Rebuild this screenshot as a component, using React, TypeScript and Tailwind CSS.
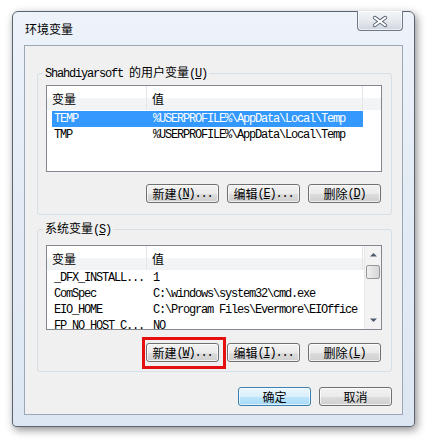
import React from 'react';

const cjk = "font-['Noto_Sans_CJK_SC',sans-serif]";
const mono = "font-['Liberation_Mono','Noto_Sans_CJK_SC',monospace] tracking-[-1.2px]";

function Ul({ children }: { children: React.ReactNode }) {
  return <span className="underline underline-offset-[1px]">{children}</span>;
}

function WinButton({
  label,
  hotkey,
  dots = true,
  primary = false,
}: {
  label: string;
  hotkey?: string;
  dots?: boolean;
  primary?: boolean;
}) {
  return (
    <button
      className={
        primary
          ? 'flex h-[19px] w-[73px] items-center justify-center rounded-[3px] border border-[#3c7fb1] bg-[linear-gradient(to_bottom,#eaf6fd_0%,#d9f0fc_50%,#bee6fd_51%,#a7d9f5_100%)] shadow-[inset_0_0_0_1px_rgba(255,255,255,0.6)]'
          : 'flex h-[19px] w-[73px] items-center justify-center rounded-[3px] border border-[#707070] bg-[linear-gradient(to_bottom,#f2f2f2_0%,#ebebeb_50%,#dddddd_51%,#cfcfcf_100%)] shadow-[inset_0_0_0_1px_rgba(255,255,255,0.7)]'
      }
    >
      <span className={`${cjk} text-[12px] leading-[16px] text-black`}>{label}</span>
      {hotkey && (
        <span className={`${mono} text-[12px] leading-[16px] text-black`}>
          (<Ul>{hotkey}</Ul>){dots ? '...' : ''}
        </span>
      )}
    </button>
  );
}

function ListHeader() {
  return (
    <div className="flex h-[24px] shrink-0 bg-[linear-gradient(to_bottom,#ffffff_0%,#ffffff_50%,#f4f5f7_51%,#f1f2f4_100%)]">
      <div className={`${cjk} w-[100px] border-r border-[#e3e5e8] pl-[5px] pt-[5px] text-[12px] leading-[16px]`}>变量</div>
      <div className={`${cjk} w-[216px] border-r border-[#e3e5e8] pl-[5px] pt-[5px] text-[12px] leading-[16px]`}>值</div>
      <div className="flex-1" />
    </div>
  );
}

function Row({ name, value, selected = false }: { name: string; value: string; selected?: boolean }) {
  return (
    <div className="flex h-[16px] shrink-0 pl-[5px]">
      <div className={`flex w-[311px] ${selected ? 'bg-[#3399ff] text-white' : 'text-black'}`}>
        <div className={`${mono} w-[95px] overflow-hidden whitespace-nowrap pl-[2px] text-[12px] leading-[16px]`}>{name}</div>
        <div className={`${mono} flex-1 overflow-hidden whitespace-nowrap pl-[6px] text-[12px] leading-[16px]`}>{value}</div>
      </div>
    </div>
  );
}

function Arrow({ up }: { up: boolean }) {
  return (
    <svg width="9" height="5" viewBox="0 0 9 5">
      <path d={up ? 'M1 4.5 L4.5 1 L8 4.5 Z' : 'M1 0.5 L4.5 4 L8 0.5 Z'} fill="#4d5a6e" />
    </svg>
  );
}

function ScrollBar() {
  return (
    <div className="flex w-[17px] shrink-0 flex-col border-l border-[#e8e8e8] bg-[#f3f3f3]">
      <div className="flex h-[17px] items-center justify-center">
        <Arrow up />
      </div>
      <div className="mx-[1px] mt-[2px] h-[14px] rounded-[2px] border border-[#979797] bg-[linear-gradient(to_right,#f0f0f0,#e2e2e2_50%,#d6d6d6)]" />
      <div className="flex-1" />
      <div className="flex h-[17px] items-center justify-center">
        <Arrow up={false} />
      </div>
    </div>
  );
}

function GroupLegend({ children }: { children: React.ReactNode }) {
  return <legend className="-ml-[3px] px-[2px] text-[12px] leading-[16px] text-black">{children}</legend>;
}

function CloseButton() {
  return (
    <div className="-mt-px flex h-[20px] w-[46px] items-center justify-center rounded-b-[4px] border border-t-0 border-[#6f7b88] bg-[linear-gradient(to_bottom,#f4f6f9_0%,#e6eaef_50%,#cfd6de_100%)] shadow-[inset_0_0_0_1px_rgba(255,255,255,0.6)]">
      <svg width="46" height="20" viewBox="0 0 46 20">
        <path d="M17.5 6.5 L28.5 14.5 M28.5 6.5 L17.5 14.5" stroke="#5f6b78" strokeWidth="4" strokeLinecap="round" />
        <path d="M17.5 6.5 L28.5 14.5 M28.5 6.5 L17.5 14.5" stroke="#ffffff" strokeWidth="2" strokeLinecap="round" />
      </svg>
    </div>
  );
}

export default function App() {
  return (
    <div className="h-[443px] w-[433px] overflow-hidden bg-white pl-[12px] pt-[11px]">
      {/* window frame */}
      <div className="flex h-[416px] w-[403px] flex-col rounded-t-[6px] rounded-b-[4px] border border-[#5b6470] bg-[linear-gradient(to_bottom,#eef3fa_0%,#e4ecf6_40%,#dde7f3_100%)] px-[11px] pb-[11px] shadow-[2px_3px_9px_rgba(0,0,0,0.45)]">
        {/* title bar */}
        <div className="flex h-[33px] shrink-0 items-start justify-between">
          <span className={`${cjk} ml-[1px] mt-[9px] text-[12px] leading-[16px] text-black`}>环境变量</span>
          <CloseButton />
        </div>

        {/* client area */}
        <div className="flex flex-1 flex-col border border-[#9ba7b7] bg-[#f0f0f0] pl-[12px] pr-[10px] pt-[18px]">
          {/* user variables */}
          <fieldset className="rounded-[3px] border border-[#d5dfe5] pb-[11px] pl-[8px] pr-[9px] pt-[3px]">
            <GroupLegend>
              <span className={mono}>Shahdiyarsoft </span>
              <span className={cjk}>的用户变量</span>
              <span className={mono}>
                (<Ul>U</Ul>)
              </span>
            </GroupLegend>
            <div className="flex h-[87px] flex-col border border-[#828790] bg-white">
              <ListHeader />
              <div className="mt-[1px] flex flex-col">
                <Row name="TEMP" value="%USERPROFILE%\AppData\Local\Temp" selected />
                <Row name="TMP" value="%USERPROFILE%\AppData\Local\Temp" />
              </div>
            </div>
            <div className="mt-[12px] flex justify-end gap-[8px] pr-[1px]">
              <WinButton label="新建" hotkey="N" />
              <WinButton label="编辑" hotkey="E" />
              <WinButton label="删除" hotkey="D" dots={false} />
            </div>
          </fieldset>

          {/* system variables */}
          <fieldset className="mt-[5px] rounded-[3px] border border-[#d5dfe5] pb-[9px] pl-[8px] pr-[9px] pt-[7px]">
            <GroupLegend>
              <span className={cjk}>系统变量</span>
              <span className={mono}>
                (<Ul>S</Ul>)
              </span>
            </GroupLegend>
            <div className="flex h-[85px] overflow-hidden border border-[#828790] bg-white">
              <div className="flex flex-1 flex-col overflow-hidden">
                <ListHeader />
                <Row name="_DFX_INSTALL..." value="1" />
                <Row name="ComSpec" value="C:\windows\system32\cmd.exe" />
                <Row name="EIO_HOME" value="C:\Program Files\Evermore\EIOffice" />
                <Row name="FP_NO_HOST_C..." value="NO" />
              </div>
              <ScrollBar />
            </div>
            <div className="mt-[13px] flex justify-end gap-[8px] pr-[1px]">
              <div className="relative">
                <WinButton label="新建" hotkey="W" />
                <div className="absolute -bottom-[7px] -left-[4px] -right-[7px] -top-[6px] border-[3px] border-[#e50f0f]" />
              </div>
              <WinButton label="编辑" hotkey="I" />
              <WinButton label="删除" hotkey="L" dots={false} />
            </div>
          </fieldset>

          {/* dialog buttons */}
          <div className="mt-[15px] flex justify-end gap-[8px]">
            <WinButton label="确定" primary />
            <WinButton label="取消" />
          </div>
        </div>
      </div>
    </div>
  );
}
